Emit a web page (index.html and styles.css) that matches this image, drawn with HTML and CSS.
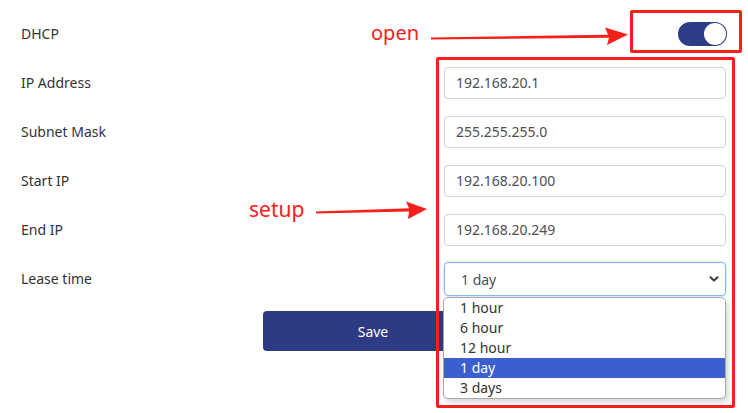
FILE: index.html
```html
<!DOCTYPE html>
<html>
<head>
<meta charset="utf-8">
<link rel="stylesheet" href="styles.css">
</head>
<body>
<div class="page">
  <form class="form">
    <div class="row">
      <label class="label">DHCP</label>
      <div class="control control-end">
        <span class="switch"><span class="knob"></span></span>
      </div>
    </div>
    <div class="row">
      <label class="label">IP Address</label>
      <div class="control"><input class="input" value="192.168.20.1"></div>
    </div>
    <div class="row">
      <label class="label">Subnet Mask</label>
      <div class="control"><input class="input" value="255.255.255.0"></div>
    </div>
    <div class="row">
      <label class="label">Start IP</label>
      <div class="control"><input class="input" value="192.168.20.100"></div>
    </div>
    <div class="row">
      <label class="label">End IP</label>
      <div class="control"><input class="input" value="192.168.20.249"></div>
    </div>
    <div class="row">
      <label class="label">Lease time</label>
      <div class="control">
        <div class="select">
          <span>1 day</span>
          <svg class="chev" width="10" height="8" viewBox="0 0 10 8"><path d="M1.5 2.2 L5 5.6 L8.5 2.2" fill="none" stroke="#343a40" stroke-width="2" stroke-linecap="round" stroke-linejoin="round"/></svg>
        </div>
      </div>
    </div>
    <div class="actions">
      <button type="button" class="save">Save</button>
    </div>
  </form>

  <ul class="menu">
    <li>1 hour</li>
    <li>6 hour</li>
    <li>12 hour</li>
    <li class="active">1 day</li>
    <li>3 days</li>
  </ul>

  <div class="box box-toggle"></div>
  <div class="box box-fields"></div>

  <span class="note note-open">open</span>
  <svg class="arrow arrow-open" width="200" height="20" viewBox="0 0 200 20">
    <polygon points="0,10.5 0,12.5 178,10.8 176,18 197,7.5 174,0.5 177,7.8" fill="#f5201b"/>
  </svg>
  <span class="note note-setup">setup</span>
  <svg class="arrow arrow-setup" width="112" height="20" viewBox="0 0 112 20">
    <polygon points="0,11.5 0,13.5 93,11.4 92,19 111,9 90,1.5 93,8.2" fill="#f5201b"/>
  </svg>
</div>
</body>
</html>
```
FILE: styles.css
```css
* { box-sizing: border-box; }
html, body { margin: 0; padding: 0; background: #fff; }
body {
  font-family: "Noto Sans", "Open Sans", sans-serif;
  color: #333;
  font-size: 14px;
}
.page {
  position: relative;
  width: 748px;
  height: 413px;
  overflow: hidden;
}
.form {
  padding: 9px 22px 0 21px;
}
.row {
  display: flex;
  align-items: center;
  height: 49px;
}
.label {
  flex: 1;
  font-size: 14px;
  color: #333;
}
.control {
  width: 282px;
  display: flex;
}
.control-end { justify-content: flex-end; }
.switch {
  position: relative;
  display: block;
  width: 49px;
  height: 24px;
  border-radius: 12px;
  background: #2d3c87;
  margin-right: -1px;
}
.knob {
  position: absolute;
  right: 1px;
  top: 1px;
  width: 22px;
  height: 22px;
  border-radius: 50%;
  background: #fff;
}
.input {
  width: 282px;
  height: 32px;
  border: 1px solid #ced4da;
  border-radius: 4px;
  padding: 0 11px;
  font-family: "Noto Sans", "Open Sans", sans-serif;
  font-size: 14px;
  color: #495057;
  background: #fff;
  outline: none;
}
.select {
  width: 282px;
  height: 34px;
  margin-top: 1px;
  border: 1px solid #86b7fe;
  border-radius: 4px;
  box-shadow: 0 0 0 1px rgba(134,183,254,0.25);
  display: flex;
  align-items: center;
  justify-content: space-between;
  padding: 0 6px 0 16px;
  color: #495057;
  font-size: 14px;
}
.chev { display: block; }
.actions {
  display: flex;
  justify-content: center;
  padding: 8px 0 0 0;
  margin-left: -21px;
  margin-right: -22px;
}
.save {
  width: 220px;
  height: 40px;
  margin-left: -2px;
  border: none;
  border-radius: 4px;
  background: #2c3b84;
  color: #fff;
  font-family: "Noto Sans", "Open Sans", sans-serif;
  font-size: 14px;
}
.menu {
  position: absolute;
  left: 443px;
  top: 297px;
  width: 283px;
  margin: 0;
  padding: 0;
  list-style: none;
  background: #fff;
  border: 1px solid #a9a9a9;
  border-radius: 5px;
  box-shadow: 2px 3px 6px rgba(0,0,0,0.18);
  overflow: hidden;
}
.menu li {
  height: 20px;
  line-height: 19px;
  padding-left: 16px;
  font-size: 14px;
  color: #333;
}
.menu li.active {
  background: #3c5ecf;
  color: #fff;
}
.box {
  position: absolute;
  border: 3px solid #f5201b;
  border-radius: 2px;
}
.box-toggle { left: 630px; top: 10px; width: 112px; height: 43px; }
.box-fields { left: 436px; top: 57px; width: 299px; height: 351px; }
.note {
  position: absolute;
  color: #f5201b;
  font-family: "Noto Sans", "Open Sans", sans-serif;
  font-size: 20px;
  line-height: 24px;
}
.note-open { left: 371px; top: 21px; }
.note-setup { left: 249px; top: 197px; font-size: 21px; }
.arrow { position: absolute; display: block; }
.arrow-open { left: 431px; top: 27px; }
.arrow-setup { left: 316px; top: 200px; }
```
